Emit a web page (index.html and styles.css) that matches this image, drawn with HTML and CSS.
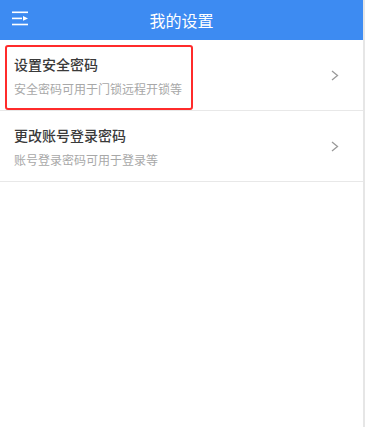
FILE: index.html
```html
<!DOCTYPE html>
<html lang="zh-CN">
<head>
<meta charset="utf-8">
<title>我的设置</title>
<link rel="stylesheet" href="styles.css">
</head>
<body>
<div class="frame">
  <div class="app">
    <header class="topbar">
      <svg class="menu-icon" width="18" height="16" viewBox="0 0 18 16">
        <rect x="0" y="0.5" width="16" height="1.6" fill="#fff"/>
        <rect x="0" y="6.6" width="10" height="1.6" fill="#fff"/>
        <polygon points="11,5 16,7.4 11,9.8" fill="#fff"/>
        <rect x="0" y="12.7" width="16" height="1.6" fill="#fff"/>
      </svg>
      <h1 class="title">我的设置</h1>
    </header>
    <ul class="list">
      <li class="item">
        <div class="texts">
          <div class="item-title">设置安全密码</div>
          <div class="item-sub">安全密码可用于门锁远程开锁等</div>
        </div>
        <svg class="chev" width="8" height="11" viewBox="0 0 8 11"><polyline points="1,1 6.5,5.5 1,10" fill="none" stroke="#9a9a9a" stroke-width="1.3"/></svg>
        <div class="highlight"></div>
      </li>
      <li class="item">
        <div class="texts">
          <div class="item-title">更改账号登录密码</div>
          <div class="item-sub">账号登录密码可用于登录等</div>
        </div>
        <svg class="chev" width="8" height="11" viewBox="0 0 8 11"><polyline points="1,1 6.5,5.5 1,10" fill="none" stroke="#9a9a9a" stroke-width="1.3"/></svg>
      </li>
    </ul>
  </div>
  <div class="edge"></div>
</div>
</body>
</html>
```
FILE: styles.css
```css
html, body {
  margin: 0;
  padding: 0;
  background: #fff;
}
body {
  font-family: "Noto Sans CJK SC", "Noto Sans", sans-serif;
}
.frame {
  display: flex;
  height: 427px;
}
.app {
  flex: 1;
  display: flex;
  flex-direction: column;
}
.edge {
  width: 2px;
  background: #e6e6e6;
}
.topbar {
  position: relative;
  height: 40px;
  background: #3d8bf2;
  display: flex;
  align-items: center;
  justify-content: center;
}
.menu-icon {
  position: absolute;
  left: 12px;
  top: 11px;
}
.title {
  margin: 0;
  font-size: 16px;
  font-weight: 400;
  color: #fff;
  line-height: 20px;
}
.list {
  list-style: none;
  margin: 0;
  padding: 0;
}
.item {
  position: relative;
  height: 70px;
  border-bottom: 1px solid #e8e8e8;
  display: flex;
  align-items: center;
  padding: 0 24px 0 14px;
}
.texts {
  flex: 1;
  align-self: flex-start;
  display: flex;
  flex-direction: column;
  padding-top: 14px;
}
.item-title {
  font-size: 14px;
  line-height: 20px;
  font-weight: 500;
  color: #3a3a3a;
}
.item-sub {
  margin-top: 6px;
  font-size: 12px;
  line-height: 18px;
  color: #a8a8a8;
}
.chev {
  display: block;
}
.highlight {
  position: absolute;
  left: 5px;
  top: 5px;
  width: 184px;
  height: 61px;
  border: 2px solid #ff2b2b;
  border-radius: 3px;
  pointer-events: none;
}
```
